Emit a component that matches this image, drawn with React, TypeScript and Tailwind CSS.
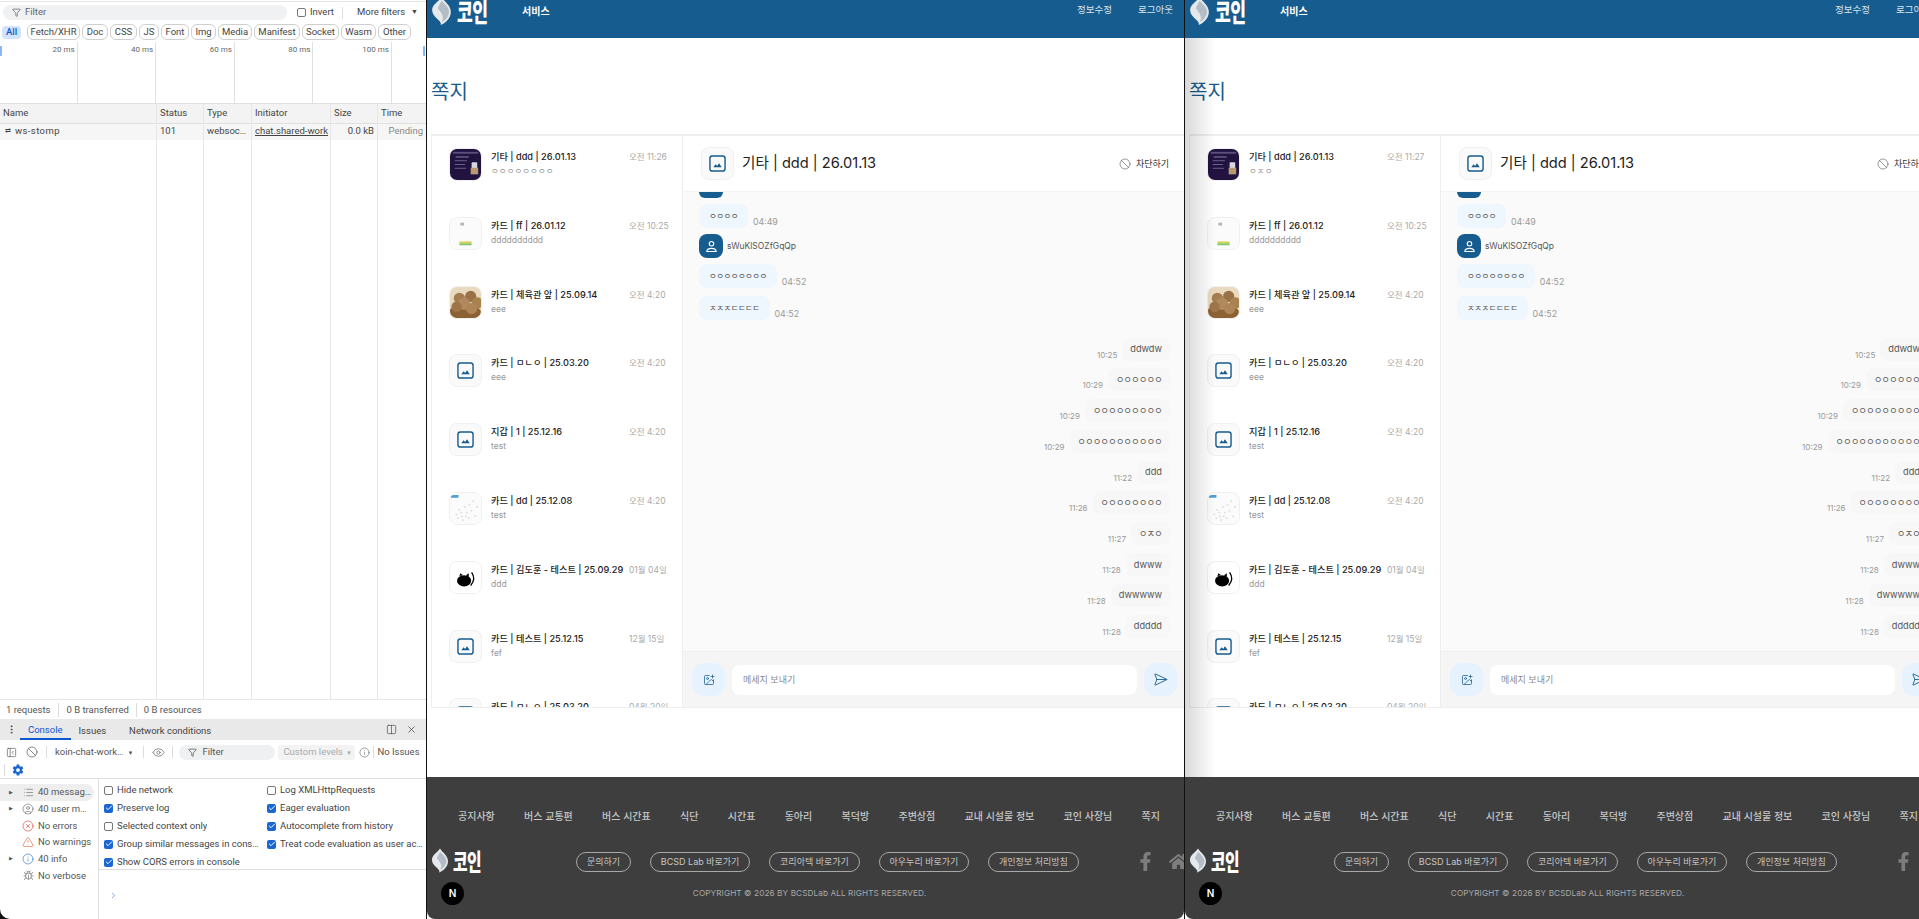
import { Ban, Check, ChevronRight, CircleUser, CircleX, Columns2, EllipsisVertical, Eye, Funnel, Info, List, PanelLeftClose, SendHorizontal, ImagePlus, TriangleAlert, Bug, X } from 'lucide-react';
import { FaFacebookF, FaHome } from 'react-icons/fa';
import { IoSettingsSharp } from 'react-icons/io5';

const FONT = "font-['Inter','Noto_Sans_CJK_KR',sans-serif]";

// ---------- shared drawings ----------
function PlaceholderIcon({ size = 17 }: { size?: number }) {
  return (
    <svg width={size} height={size} viewBox="0 0 18 18" fill="none">
      <rect x="1" y="1" width="16" height="16" rx="2.5" stroke="#175c8e" strokeWidth="1.5" />
      <path d="M4.5 13 L7 9.8 L8.6 11.6 L10.6 8.8 L13.5 13 Z" fill="#175c8e" />
    </svg>
  );
}

function Droplet({ w, h }: { w: number; h: number }) {
  return (
    <svg width={w} height={h} viewBox="0 0 20 30" className="shrink-0">
      <path d="M10 0 C13 5 20 9 20 16 C20 23 14 28 9 30 C10 27 8 26 5 23 C2 20 0 18 0 14 C0 8 7 5 10 0 Z" fill="#e6e9ec" />
      <path d="M10 4 C14 8 18 11 18 16 C18 21 14 25 10 27 C14 21 9 16 6 12 C7 9 9 7 10 4 Z" fill="#b4bdc6" />
    </svg>
  );
}

function Logo({ big }: { big?: boolean }) {
  return (
    <div className="flex items-center">
      <Droplet w={big ? 19 : 16} h={big ? 28 : 27} />
      <span
        className={`font-['Noto_Sans_CJK_KR',sans-serif] font-black text-white tracking-[-1px] origin-left scale-x-[0.66] whitespace-nowrap ${
          big ? 'text-[26px] leading-[26px] ml-[6px]' : 'text-[24px] leading-[24px] ml-[5px]'
        }`}
      >
        코인
      </span>
    </div>
  );
}

function UserAvatar() {
  return (
    <div className="w-6 h-6 rounded-lg bg-[#175c8e] flex items-center justify-center shrink-0">
      <svg width="13" height="13" viewBox="0 0 14 14" fill="none" stroke="#fff" strokeWidth="1.2">
        <circle cx="7" cy="4" r="2.4" />
        <path d="M2 12.4 C2 9.8 4 9 7 9 C10 9 12 9.8 12 12.4 Z" strokeLinejoin="round" />
      </svg>
    </div>
  );
}

// ---------- little thumbnails ----------
function ThumbPhone() {
  return (
    <svg viewBox="0 0 33 33" className="w-full h-full">
      <rect width="33" height="33" fill="#21123f" />
      <rect x="3" y="3" width="27" height="2" fill="#5a4f7d" />
      <rect x="6" y="8" width="14" height="1" fill="#8d86a8" />
      <rect x="5" y="12" width="13" height="1" fill="#6d6590" />
      <rect x="5" y="16" width="11" height="1" fill="#6d6590" />
      <rect x="5" y="20" width="12" height="1" fill="#6d6590" />
      <rect x="23" y="14" width="6" height="11" rx="1" fill="#d4d8de" />
      <rect x="22" y="20" width="8" height="7" fill="#b89a6e" />
    </svg>
  );
}
function ThumbGreen() {
  return (
    <svg viewBox="0 0 33 33" className="w-full h-full">
      <rect width="33" height="33" fill="#fbfbfb" />
      <rect x="11" y="5" width="4" height="3" fill="#b5b5b5" />
      <rect x="10" y="25" width="13" height="2" fill="#d8d04a" />
      <rect x="10" y="27" width="13" height="2" fill="#7fc56a" />
    </svg>
  );
}
function ThumbPotato() {
  return (
    <svg viewBox="0 0 33 33" className="w-full h-full">
      <rect width="33" height="33" fill="#e9d9bf" />
      <ellipse cx="16" cy="27" rx="17" ry="8" fill="#8c6235" />
      <circle cx="10" cy="12" r="6" fill="#a57c50" />
      <circle cx="22" cy="10" r="6" fill="#9a7145" />
      <circle cx="29" cy="17" r="6" fill="#a9834f" />
      <circle cx="15" cy="18" r="6.5" fill="#b08a5e" />
      <circle cx="7" cy="21" r="5.5" fill="#9e7549" />
      <circle cx="23" cy="23" r="6" fill="#ad8557" />
    </svg>
  );
}
function ThumbMap() {
  const dots = [[6, 22], [9, 17], [12, 24], [15, 14], [17, 20], [20, 12], [22, 18], [24, 8], [26, 24], [13, 28], [8, 26], [19, 26], [28, 14], [11, 20], [16, 24]];
  return (
    <svg viewBox="0 0 33 33" className="w-full h-full">
      <rect width="33" height="33" fill="#fbfbfb" />
      <path d="M1 4 Q1 2 4 2 H9 V5 H1 Z" fill="#4d9fd6" />
      {dots.map(([x, y], i) => (
        <rect key={i} x={x} y={y} width="1.6" height="1.6" fill="#d6d8da" />
      ))}
    </svg>
  );
}
function ThumbCat() {
  return (
    <svg viewBox="0 0 33 33" className="w-full h-full">
      <rect width="33" height="33" fill="#fff" />
      <ellipse cx="15" cy="20" rx="7.5" ry="6" fill="#000" />
      <path d="M10 15 L11 12 L14 14 Z M17 14 L20 12 L20 16 Z" fill="#000" />
      <path d="M23 11 Q28 18 22 25" stroke="#000" strokeWidth="1.4" fill="none" />
    </svg>
  );
}

// ---------- chat data ----------
type Room = { title: string; sub: string; time: string; thumb?: () => React.ReactElement };

const rooms = (first: string, firstTime: string): Room[] => [
  { title: '기타 | ddd | 26.01.13', sub: first, time: firstTime, thumb: ThumbPhone },
  { title: '카드 | ff | 26.01.12', sub: 'dddddddddd', time: '오전 10:25', thumb: ThumbGreen },
  { title: '카드 | 체육관 앞 | 25.09.14', sub: 'eee', time: '오전 4:20', thumb: ThumbPotato },
  { title: '카드 | ㅁㄴㅇ | 25.03.20', sub: 'eee', time: '오전 4:20' },
  { title: '지갑 | 1 | 25.12.16', sub: 'test', time: '오전 4:20' },
  { title: '카드 | dd | 25.12.08', sub: 'test', time: '오전 4:20', thumb: ThumbMap },
  { title: '카드 | 김도훈 - 테스트 | 25.09.29', sub: 'ddd', time: '01월 04일', thumb: ThumbCat },
  { title: '카드 | 테스트 | 25.12.15', sub: 'fef', time: '12월 15일' },
  { title: '카드 | ㅁㄴㅇ | 25.03.20', sub: 'eee', time: '04월 20일' },
];

const sentMessages = [
  { text: 'ddwdw', time: '10:25', latin: true },
  { text: 'ㅇㅇㅇㅇㅇㅇ', time: '10:29' },
  { text: 'ㅇㅇㅇㅇㅇㅇㅇㅇㅇ', time: '10:29' },
  { text: 'ㅇㅇㅇㅇㅇㅇㅇㅇㅇㅇㅇ', time: '10:29' },
  { text: 'ddd', time: '11:22', latin: true },
  { text: 'ㅇㅇㅇㅇㅇㅇㅇㅇ', time: '11:26' },
  { text: 'ㅇㅈㅇ', time: '11:27' },
  { text: 'dwww', time: '11:28', latin: true },
  { text: 'dwwwww', time: '11:28', latin: true },
  { text: 'ddddd', time: '11:28', latin: true },
];

const footerLinks = ['공지사항', '버스 교통편', '버스 시간표', '식단', '시간표', '동아리', '복덕방', '주변상점', '교내 시설물 정보', '코인 사장님', '쪽지'];
const footerButtons = ['문의하기', 'BCSD Lab 바로가기', '코리아텍 바로가기', '아우누리 바로가기', '개인정보 처리방침'];

function RoomRow({ room }: { room: Room }) {
  const Thumb = room.thumb;
  return (
    <div className="h-[68.8px] shrink-0 flex items-start pl-[17px]">
      <div className="w-[33px] h-[33px] shrink-0 rounded-lg overflow-hidden border border-[#f0f0f0] bg-[#fafafa] flex items-center justify-center">
        {Thumb ? <Thumb /> : <PlaceholderIcon />}
      </div>
      <div className="w-[138px] ml-[9px] shrink-0">
        <div className="text-[9.2px] leading-[13px] mt-[2px] font-medium text-[#222] whitespace-nowrap">{room.title}</div>
        <div className="text-[8.5px] leading-[12px] mt-[2px] text-[#999]">{room.sub}</div>
      </div>
      <div className="text-[8.5px] leading-[14px] mt-[2px] text-[#aaa] whitespace-nowrap">{room.time}</div>
    </div>
  );
}

function ReceivedBubble({ text, time }: { text: string; time: string }) {
  return (
    <div className="flex items-end gap-[5px] mb-[8px]">
      <div className="h-[24px] px-[10px] rounded-lg bg-[#eef6fe] text-[8.5px] tracking-[-0.6px] text-[#555] flex items-center whitespace-nowrap">{text}</div>
      <span className="text-[8.8px] text-[#999] leading-[12px]">{time}</span>
    </div>
  );
}

function Browser({ first, firstTime }: { first: string; firstTime: string }) {
  return (
    <div className={`w-[757px] h-full shrink-0 flex flex-col bg-white ${FONT}`}>
      {/* Header */}
      <div className="h-[38px] shrink-0 bg-[#175c8e] flex items-start pl-[5px] pr-[11px] overflow-hidden">
        <div className="-mt-[3px] w-[90px] shrink-0">
          <Logo big />
        </div>
        <span className="text-[10px] font-bold text-white mt-[4px] leading-[14px]">서비스</span>
        <div className="ml-auto flex gap-[26px] text-[9.5px] text-[#d8e4ee] mt-[3px] leading-[14px]">
          <span>정보수정</span>
          <span>로그아웃</span>
        </div>
      </div>

      {/* Title */}
      <div className="h-[96px] shrink-0 pl-[4px] pt-[41px]">
        <h1 className="text-[20px] leading-[26px] text-[#175c8e]">쪽지</h1>
      </div>

      {/* Panel */}
      <div className="h-[574px] shrink-0 ml-[4px] flex border-t-2 border-l border-[#eeeeee] border-b">
        {/* Room list */}
        <div className="w-[251px] shrink-0 pt-[12px] overflow-hidden flex flex-col border-r border-[#eeeeee]">
          {rooms(first, firstTime).map((room, i) => (
            <RoomRow key={i} room={room} />
          ))}
        </div>

        {/* Chat */}
        <div className="flex-1 min-w-0 flex flex-col">
          <div className="h-[56px] shrink-0 flex items-center pl-[18px] pr-[15px] border-b border-[#f3f3f3]">
            <div className="w-[33px] h-[33px] rounded-lg border border-[#f0f0f0] bg-[#fafafa] flex items-center justify-center">
              <PlaceholderIcon />
            </div>
            <span className="ml-[8px] text-[14.6px] text-[#222]">기타 | ddd | 26.01.13</span>
            <div className="ml-auto flex items-center gap-[5px] text-[9px] text-[#333]">
              <Ban size={12} strokeWidth={1.2} color="#555" />
              차단하기
            </div>
          </div>

          <div className="h-[459px] shrink-0 bg-[#fafafa] pl-[16px] pr-[14px] overflow-hidden flex flex-col">
            <div className="h-[6px] w-[24px] rounded-b-lg bg-[#175c8e] mb-[6px]" />
            <ReceivedBubble text="ㅇㅇㅇㅇ" time="04:49" />
            <div className="flex items-center gap-[4px] mb-[6px] -mt-[2px]">
              <UserAvatar />
              <span className="text-[8.5px] text-[#555]">sWuKlSOZfGqQp</span>
            </div>
            <ReceivedBubble text="ㅇㅇㅇㅇㅇㅇㅇㅇ" time="04:52" />
            <ReceivedBubble text="ㅈㅈㅈㄷㄷㄷㄷ" time="04:52" />

            <div className="flex flex-col mt-[9.5px]">
              {sentMessages.map((m, i) => (
                <div key={i} className="flex justify-end items-end gap-[5px] mb-[7.8px]">
                  <span className="text-[8px] text-[#999] leading-[12px]">{m.time}</span>
                  <div className={`h-[23px] rounded-lg bg-[#f7f7f7] text-[#555] flex items-center whitespace-nowrap ${m.latin ? 'px-[8px] text-[9.2px]' : 'px-[8px] text-[9px] tracking-[-0.6px]'}`}>{m.text}</div>
                </div>
              ))}
            </div>
          </div>

          <div className="flex-1 bg-[#f5f5f5] flex items-center pl-[9px] pr-[7px] gap-[7px] border-t border-[#eeeeee]">
            <div className="w-[33px] h-[33px] rounded-xl bg-[#e6f2fd] flex items-center justify-center shrink-0">
              <ImagePlus size={12} strokeWidth={1.5} color="#175c8e" />
            </div>
            <div className="flex-1 h-[30px] rounded-lg bg-white flex items-center pl-[11px] text-[9px] text-[#8a8a8a]">메세지 보내기</div>
            <div className="w-[33px] h-[33px] rounded-xl bg-[#e6f2fd] flex items-center justify-center shrink-0">
              <SendHorizontal size={15} strokeWidth={1.4} color="#175c8e" />
            </div>
          </div>
        </div>
      </div>

      <div className="h-[69px] shrink-0" />

      {/* Footer */}
      <div className="flex-1 bg-[#3e3e3e] overflow-hidden relative rounded-b-[8px]">
        <div className="flex pl-[31px] pt-[32px] gap-[29.3px] text-[10px] leading-[14px] font-medium text-[#c6c6c6] whitespace-nowrap">
          {footerLinks.map((l) => (
            <span key={l}>{l}</span>
          ))}
        </div>
        <div className="flex items-center mt-[26px] pl-[5px]">
          <div className="w-[144px] shrink-0 -mt-[2px]">
            <Logo />
          </div>
          <div className="flex gap-[18.7px]">
            {footerButtons.map((b) => (
              <span key={b} className="h-[20px] px-[10px] rounded-full border border-[#a8a8a8] text-[9px] text-[#c6c6c6] flex items-center whitespace-nowrap">
                {b}
              </span>
            ))}
          </div>
          <div className="flex items-center gap-[14px] ml-[57px] text-[#7d7d7d]">
            <FaFacebookF size={19} />
            <FaHome size={19} />
          </div>
        </div>
        <div className="text-center text-[8.2px] leading-[12px] tracking-[0.1px] text-[#a8a8a8] mt-[13px] pl-[8px]">COPYRIGHT © 2026 BY BCSDLab ALL RIGHTS RESERVED.</div>
        <div className="absolute left-[14px] top-[105px] w-[23px] h-[23px] rounded-full bg-black flex items-center justify-center text-white text-[10px] font-semibold">N</div>
      </div>
    </div>
  );
}

// ---------- devtools ----------
const chips = [
  { label: 'Fetch/XHR', w: 'w-[53px]' },
  { label: 'Doc', w: 'w-[26px]' },
  { label: 'CSS', w: 'w-[27px]' },
  { label: 'JS', w: 'w-[20px]' },
  { label: 'Font', w: 'w-[28px]' },
  { label: 'Img', w: 'w-[25px]' },
  { label: 'Media', w: 'w-[34px]' },
  { label: 'Manifest', w: 'w-[46px]' },
  { label: 'Socket', w: 'w-[37px]' },
  { label: 'Wasm', w: 'w-[35px]' },
  { label: 'Other', w: 'w-[33px]' },
];
const ticks = ['20 ms', '40 ms', '60 ms', '80 ms', '100 ms'];
const columns = [
  { w: 'w-[157px]', head: 'Name', cell: 'ws-stomp' },
  { w: 'w-[47px]', head: 'Status', cell: '101' },
  { w: 'w-[48px]', head: 'Type', cell: 'websoc…' },
  { w: 'w-[79px]', head: 'Initiator', cell: 'chat.shared-work' },
  { w: 'w-[47px]', head: 'Size', cell: '0.0 kB' },
  { w: 'flex-1', head: 'Time', cell: 'Pending' },
];

function CheckItem({ label, on }: { label: string; on?: boolean }) {
  return (
    <div className="h-[18px] flex items-center gap-[4px] whitespace-nowrap overflow-hidden">
      {on ? (
        <span className="w-[9px] h-[9px] rounded-[2px] bg-[#1a66d2] flex items-center justify-center shrink-0">
          <Check size={8} strokeWidth={3} color="#fff" />
        </span>
      ) : (
        <span className="w-[9px] h-[9px] rounded-[2px] border border-[#777] shrink-0" />
      )}
      <span className="truncate">{label}</span>
    </div>
  );
}

function SideItem({ icon, label, arrow, active }: { icon: React.ReactNode; label: string; arrow?: boolean; active?: boolean }) {
  return (
    <div className={`h-[16.7px] flex items-center pl-[9px] rounded-r-full whitespace-nowrap ${active ? 'bg-[#eeeeee]' : ''}`}>
      <span className="w-[11px] shrink-0 text-[5px] text-[#555]">{arrow ? '▶' : ''}</span>
      <span className="w-[16px] shrink-0 flex justify-center">{icon}</span>
      <span className="ml-[2px] truncate">{label}</span>
    </div>
  );
}

function DevTools() {
  return (
    <div className="w-[426px] h-full shrink-0 bg-white rounded-bl-[10px] overflow-hidden flex flex-col font-['Roboto',sans-serif] text-[9.5px] text-[#444]">
      {/* Filter row */}
      <div className="h-[22px] shrink-0 mt-[1px] border-t border-[#e6e6e6] flex items-center pl-[3px] pr-[4px]">
        <div className="w-[284px] h-[15px] rounded-full bg-[#f0f1f2] flex items-center pl-[9px] gap-[4px] text-[#666]">
          <Funnel size={9} />
          Filter
        </div>
        <span className="ml-[10px] w-[9px] h-[9px] rounded-[2px] border border-[#777]" />
        <span className="ml-[4px]">Invert</span>
        <span className="ml-[8px] h-[12px] border-l border-[#ddd]" />
        <span className="ml-[14px]">More filters</span>
        <span className="ml-[6px] text-[7px]">▼</span>
      </div>

      {/* Type chips */}
      <div className="h-[18px] shrink-0 flex items-center pl-[2px] gap-[2px]">
        <span className="h-[13px] w-[19px] rounded-[4px] bg-[#d3e3fd] flex items-center justify-center text-[#0b57d0] font-medium mr-[4px]">All</span>
        {chips.map((c) => (
          <span key={c.label} className={`${c.w} h-[16px] rounded-[6px] border border-[#cfcfcf] flex items-center justify-center`}>{c.label}</span>
        ))}
      </div>

      {/* Timeline */}
      <div className="h-[62px] shrink-0 flex border-b border-[#e0e0e0] mt-[1px] relative">
        <div className="flex -ml-[1px]">
          {ticks.map((t) => (
            <div key={t} className="w-[78.6px] border-r border-[#e0e0e0] text-right pr-[2px] pt-[2px] text-[8px] text-[#666]">{t}</div>
          ))}
        </div>
        <span className="absolute left-0 top-[4px] w-[2px] h-[10px] bg-[#8ab4f8] rounded-r-[1px]" />
        <span className="absolute right-[1px] top-[4px] w-[2px] h-[10px] bg-[#8ab4f8] rounded-l-[1px]" />
      </div>

      {/* Network table */}
      <div className="flex-1 min-h-0 flex">
        {columns.map((c, i) => (
          <div key={c.head} className={`${c.w} shrink-0 border-r border-[#e6e6e6] last:border-r-0 flex flex-col`}>
            <div className="h-[20px] bg-[#f3f3f3] border-b border-[#e0e0e0] flex items-center pl-[3px]">{c.head}</div>
            <div className={`h-[16px] bg-[#f6f6f6] flex items-center pl-[3px] pb-[2px] whitespace-nowrap overflow-hidden ${i === 4 || i === 5 ? 'justify-end pr-[3px]' : ''} ${i === 5 ? 'text-[#888]' : ''} ${i === 3 ? 'underline' : ''} ${i === 0 ? 'tracking-[0.4px]' : ''}`}>
              {i === 0 && <span className="text-[7px] mr-[2px] w-[10px] text-center">⇄</span>}
              {c.cell}
            </div>
          </div>
        ))}
      </div>

      {/* Status */}
      <div className="h-[20px] shrink-0 border-t border-[#e6e6e6] flex items-center pl-[6px] pt-[1px] text-[#555]">
        <span className="pr-[8px] border-r border-[#ddd]">1 requests</span>
        <span className="px-[7px] border-r border-[#ddd]">0 B transferred</span>
        <span className="pl-[7px]">0 B resources</span>
      </div>

      {/* Drawer tabs */}
      <div className="h-[21px] shrink-0 bg-[#e9e9e9] flex items-stretch pr-[9px]">
        <span className="w-[20px] pl-[6px] flex items-center"><EllipsisVertical size={11} /></span>
        <span className="px-[8px] pt-[3px] flex items-center text-[#0b57d0] border-b-2 border-[#0b57d0]">Console</span>
        <span className="ml-[8px] pt-[3px] flex items-center">Issues</span>
        <span className="ml-[23px] pt-[3px] flex items-center">Network conditions</span>
        <span className="ml-auto flex items-center gap-[9px]">
          <Columns2 size={11} strokeWidth={1.4} />
          <X size={11} strokeWidth={1.6} />
        </span>
      </div>

      {/* Console toolbar */}
      <div className="h-[24px] shrink-0 flex items-center pl-[6px] text-[#555]">
        <PanelLeftClose size={11} strokeWidth={1.4} />
        <Ban size={12} strokeWidth={1.4} className="ml-[9px]" />
        <span className="ml-[8px] h-[12px] border-l border-[#ddd]" />
        <span className="ml-[8px]">koin-chat-work…</span>
        <span className="ml-[4px] text-[6px]">▼</span>
        <span className="ml-[10px] h-[12px] border-l border-[#ddd]" />
        <Eye size={13} strokeWidth={1.2} className="ml-[8px]" />
        <span className="ml-[7px] h-[12px] border-l border-[#ddd]" />
        <span className="ml-[6px] w-[96px] h-[15px] rounded-full bg-[#eff0f1] flex items-center pl-[9px] gap-[5px]">
          <Funnel size={9} />
          Filter
        </span>
        <span className="ml-[3px] w-[77px] h-[15px] rounded-[3px] bg-[#f3f3f3] flex items-center pl-[5px] text-[#aaa]">Custom levels <span className="ml-[3px] text-[6px]">▼</span></span>
        <Info size={11} strokeWidth={1.2} className="ml-[4px]" />
        <span className="ml-[3px] h-[12px] border-l border-[#ddd]" />
        <span className="ml-[3px] whitespace-nowrap">No Issues</span>
      </div>
      <div className="h-[15px] shrink-0 flex items-start pl-[4px] border-b border-[#dfdfdf]">
        <span className="h-[12px] border-l border-[#ddd]" />
        <IoSettingsSharp size={12} color="#1a66d2" className="ml-[7px]" />
      </div>

      {/* Console body */}
      <div className="h-[140px] shrink-0 flex">
        <div className="w-[99px] shrink-0 border-r border-[#dfdfdf] pt-[5px] pr-[4px] text-[#555]">
          <SideItem active arrow icon={<List size={11} strokeWidth={1.2} />} label="40 messag…" />
          <SideItem arrow icon={<CircleUser size={12} strokeWidth={1.1} />} label="40 user m…" />
          <SideItem icon={<CircleX size={12} strokeWidth={1.2} color="#d93025" />} label="No errors" />
          <SideItem icon={<TriangleAlert size={12} strokeWidth={1.2} color="#d9622b" />} label="No warnings" />
          <SideItem arrow icon={<Info size={12} strokeWidth={1.2} color="#1a66d2" />} label="40 info" />
          <SideItem icon={<Bug size={11} strokeWidth={1.2} />} label="No verbose" />
        </div>
        <div className="flex-1 min-w-0 flex flex-col">
          <div className="h-[91px] shrink-0 border-b border-[#dfdfdf] grid grid-cols-[163px_minmax(0,1fr)] pl-[5px] pr-[3px] content-start pt-[2px]">
            <div><CheckItem label="Hide network" /></div>
            <div><CheckItem label="Log XMLHttpRequests" /></div>
            <div><CheckItem on label="Preserve log" /></div>
            <div><CheckItem on label="Eager evaluation" /></div>
            <div><CheckItem label="Selected context only" /></div>
            <div><CheckItem on label="Autocomplete from history" /></div>
            <div className="pr-[4px]"><CheckItem on label="Group similar messages in console" /></div>
            <div><CheckItem on label="Treat code evaluation as user action" /></div>
            <div><CheckItem on label="Show CORS errors in console" /></div>
          </div>
          <div className="pl-[10px] pt-[21px]">
            <ChevronRight size={9} color="#5b8ccf" />
          </div>
        </div>
      </div>
    </div>
  );
}

export default function App() {
  return (
    <div className="w-[1919px] h-[919px] bg-[#111] flex overflow-hidden">
      <DevTools />
      <div className="w-[1px] shrink-0" />
      <Browser first="ㅇㅇㅇㅇㅇㅇㅇㅇ" firstTime="오전 11:26" />
      <div className="w-[1px] shrink-0" />
      <div className="flex-1 min-w-0 h-full overflow-hidden relative">
        <Browser first="ㅇㅈㅇ" firstTime="오전 11:27" />
        {/* shadow the front window casts over this one */}
        <div className="absolute left-0 top-[38px] h-[739px] w-[30px] bg-gradient-to-r from-black/15 to-transparent pointer-events-none" />
      </div>
    </div>
  );
}
